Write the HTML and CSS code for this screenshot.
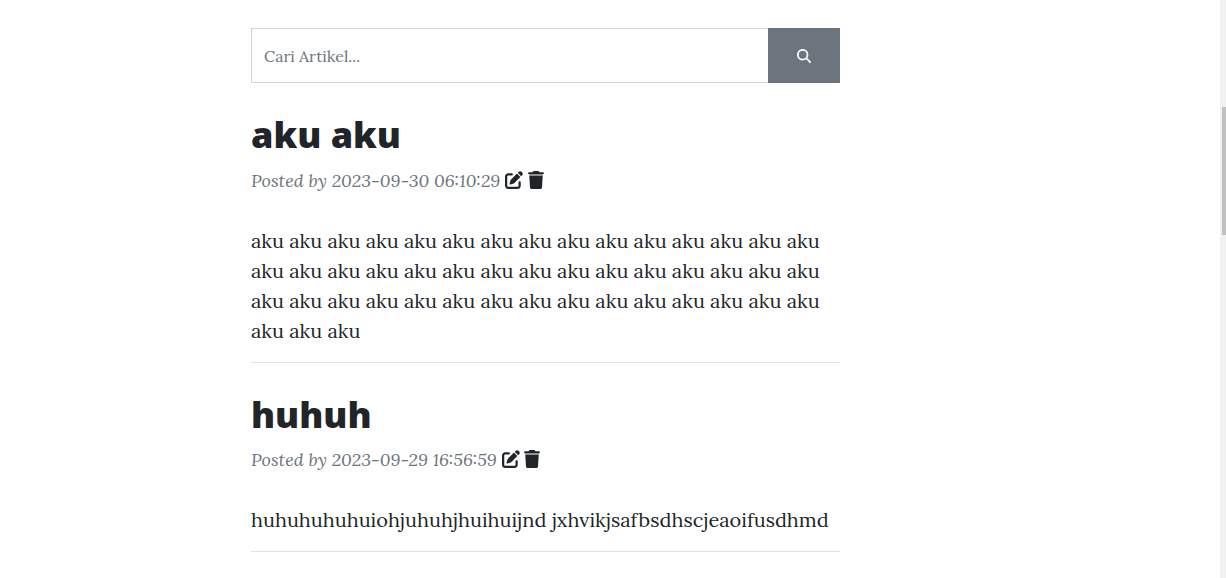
FILE: index.html
```html
<!DOCTYPE html>
<html lang="id">
<head>
    <meta charset="UTF-8">
    <meta name="viewport" content="width=device-width, initial-scale=1.0">
    <title>Artikel</title>
    <link rel="stylesheet" href="styles.css">
</head>
<body>

<svg class="symbols">
    <symbol id="search" viewBox="0 0 512 512">
        <path d="M416 208c0 45.9-14.9 88.3-40 122.7L502.6 457.4c12.5 12.5 12.5 32.8 0 45.3s-32.8 12.5-45.3 0L330.7 376c-34.4 25.2-76.8 40-122.7 40C93.1 416 0 322.9 0 208S93.1 0 208 0S416 93.1 416 208zM208 352a144 144 0 1 0 0-288 144 144 0 1 0 0 288z"/>
    </symbol>
    <symbol id="edit" viewBox="0 0 512 512">
        <path d="M471.6 21.7c-21.9-21.9-57.3-21.9-79.2 0L362.3 51.7l97.9 97.9 30.1-30.1c21.9-21.9 21.9-57.3 0-79.2L471.6 21.7zm-299.2 220c-6.1 6.1-10.8 13.6-13.5 21.9l-29.6 88.8c-2.9 8.6-.6 18.1 5.8 24.6s15.9 8.7 24.6 5.8l88.8-29.6c8.2-2.7 15.7-7.4 21.9-13.5L437.7 172.3 339.7 74.3 172.4 241.7zM96 64C43 64 0 107 0 160V416c0 53 43 96 96 96H352c53 0 96-43 96-96V320c0-17.7-14.3-32-32-32s-32 14.3-32 32v96c0 17.7-14.3 32-32 32H96c-17.7 0-32-14.3-32-32V160c0-17.7 14.3-32 32-32h96c17.7 0 32-14.3 32-32s-14.3-32-32-32H96z"/>
    </symbol>
    <symbol id="trash" viewBox="0 0 448 512">
        <path d="M135.2 17.7L128 32H32C14.3 32 0 46.3 0 64S14.3 96 32 96H416c17.7 0 32-14.3 32-32s-14.3-32-32-32H320l-7.2-14.3C307.4 6.8 296.3 0 284.2 0H163.8c-12.1 0-23.2 6.8-28.6 17.7zM416 128H32L53.2 467c1.6 25.3 22.6 45 47.9 45H346.9c25.3 0 46.3-19.7 47.9-45L416 128z"/>
    </symbol>
</svg>

<main class="content">
    <form class="search-form">
        <input class="search-input" type="text" placeholder="Cari Artikel...">
        <button class="search-button" type="button" aria-label="Cari"><svg class="icon-search"><use href="#search"/></svg></button>
    </form>

    <article class="post">
        <h2 class="post-title">aku aku</h2>
        <div class="post-meta">
            <span class="post-date">Posted by 2023-09-30 06:10:29</span>
            <svg class="icon-edit"><use href="#edit"/></svg>
            <svg class="icon-trash"><use href="#trash"/></svg>
        </div>
        <p class="post-text">aku aku aku aku aku aku aku aku aku aku aku aku aku aku aku aku aku aku aku aku aku aku aku aku aku aku aku aku aku aku aku aku aku aku aku aku aku aku aku aku aku aku aku aku aku aku aku aku</p>
    </article>

    <article class="post">
        <h2 class="post-title">huhuh</h2>
        <div class="post-meta">
            <span class="post-date">Posted by 2023-09-29 16:56:59</span>
            <svg class="icon-edit"><use href="#edit"/></svg>
            <svg class="icon-trash"><use href="#trash"/></svg>
        </div>
        <p class="post-text">huhuhuhuhuiohjuhuhjhuihuijnd jxhvikjsafbsdhscjeaoifusdhmd</p>
    </article>
</main>

<div class="scrollbar">
    <div class="scrollbar-thumb"></div>
</div>

</body>
</html>
```
FILE: styles.css
```css
* {
    box-sizing: border-box;
}

body {
    display: flex;
    justify-content: space-between;
    height: 578px;
    margin: 0;
    overflow: hidden;
    background: #fff;
    color: #212529;
    font-family: "Lora", "Liberation Serif", serif;
}

.symbols {
    display: none;
}

.content {
    width: 589px;
    margin-left: 251px;
    padding-top: 28px;
}

.search-form {
    display: flex;
    height: 55px;
    margin-bottom: 32px;
}

.search-input {
    flex: 1;
    min-width: 0;
    padding: 0 12px;
    border: 1px solid #ced4da;
    border-right: 0;
    border-radius: 0;
    outline: none;
    font-family: inherit;
    font-size: 16px;
}

.search-input::placeholder {
    color: #6c757d;
    opacity: 1;
}

.search-button {
    display: flex;
    align-items: center;
    justify-content: center;
    width: 72px;
    padding: 0;
    border: 0;
    background: #6c757d;
}

.icon-search {
    width: 14px;
    height: 14px;
    fill: #fff;
}

.post {
    height: 248px;
    margin-bottom: 32px;
    border-bottom: 1px solid #dee2e6;
}

.post + .post {
    height: 157px;
}

.post-title {
    margin: 0;
    font-family: "Open Sans", sans-serif;
    font-size: 36px;
    font-weight: 800;
    line-height: 40px;
}

.post-meta {
    display: flex;
    align-items: center;
    height: 27px;
    margin-top: 12px;
}

.post + .post .post-meta {
    margin-top: 11px;
}

.post-date {
    color: #6c757d;
    font-size: 18px;
    font-style: italic;
    white-space: nowrap;
}

.icon-edit {
    width: 18px;
    height: 18px;
    margin: 0 0 2px 5px;
    fill: #212529;
}

.icon-trash {
    width: 16px;
    height: 18px;
    margin: 0 0 2px 4.4px;
    fill: #212529;
}

.post-text {
    margin: 32px 0 0;
    font-size: 20px;
    line-height: 30px;
}

.scrollbar {
    width: 6px;
    padding: 107px 0 0 2px;
    background: #f1f1f1;
}

.scrollbar-thumb {
    height: 128px;
    background: #c1c1c1;
}
```
